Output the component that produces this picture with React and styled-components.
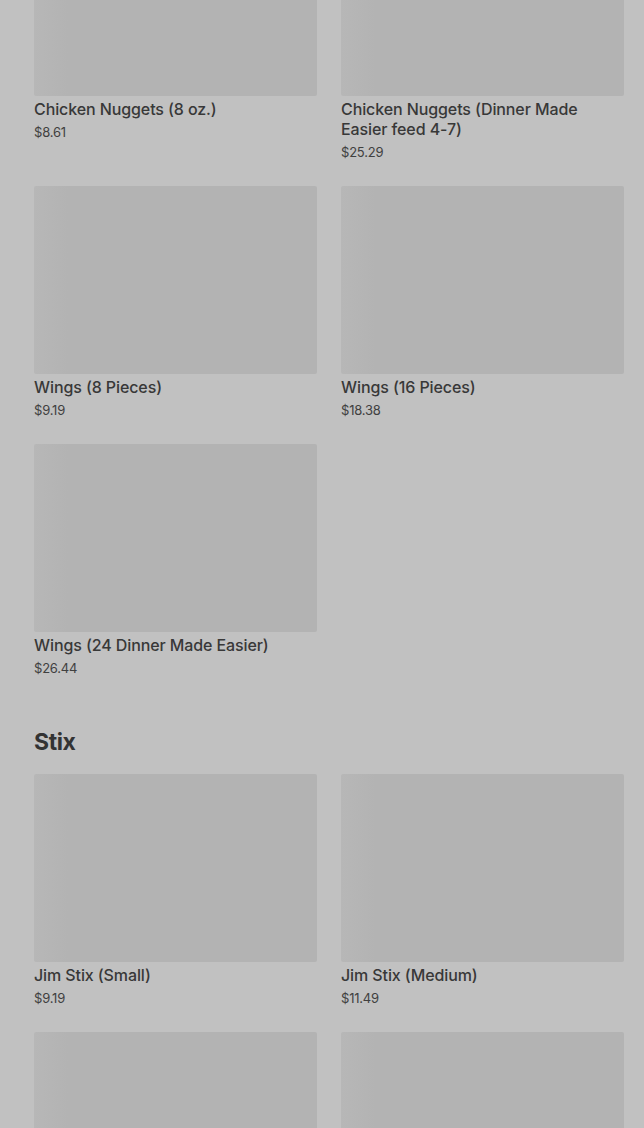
import React from 'react';
import styled, { createGlobalStyle } from 'styled-components';

const GlobalStyle = createGlobalStyle`
  html, body {
    margin: 0;
    padding: 0;
    background: #c1c1c1;
  }
  body {
    font-family: Inter, "Open Sans", sans-serif;
    color: #363636;
  }
  #root {
    height: 1128px;
    overflow: hidden;
  }
`;

const chicken = [
  { title: 'Chicken Nuggets (8 oz.)', price: '$8.61' },
  { title: 'Chicken Nuggets (Dinner Made Easier feed 4-7)', price: '$25.29' },
  { title: 'Wings (8 Pieces)', price: '$9.19' },
  { title: 'Wings (16 Pieces)', price: '$18.38' },
  { title: 'Wings (24 Dinner Made Easier)', price: '$26.44' },
];

// the last row only shows its photos in the visible frame
const stix = [
  { title: 'Jim Stix (Small)', price: '$9.19' },
  { title: 'Jim Stix (Medium)', price: '$11.49' },
  { title: null, price: null },
  { title: null, price: null },
];

const Menu = ({ sections }) => (
  <Page>
    {sections.map((section, i) => (
      <Section key={i}>
        {section.name && <Heading>{section.name}</Heading>}
        <Grid>
          {section.items.map((item, j) => (
            <Card key={j}>
              <Photo />
              {item.title && <Title>{item.title}</Title>}
              {item.price && <Price>{item.price}</Price>}
            </Card>
          ))}
        </Grid>
      </Section>
    ))}
  </Page>
);

export default function App() {
  return (
    <>
      <GlobalStyle />
      <Menu
        sections={[
          { name: null, items: chicken },
          { name: 'Stix', items: stix },
        ]}
      />
    </>
  );
}

const Page = styled.main`
  margin-top: -92px;
  padding: 0 20px 0 34px;
  display: flex;
  flex-direction: column;
  gap: 49px;
`;

const Section = styled.section`
  display: flex;
  flex-direction: column;
`;

const Heading = styled.h2`
  margin: 0 0 16px;
  font-size: 23px;
  line-height: 32px;
  font-weight: 700;
  letter-spacing: -0.4px;
  color: #333;
`;

const Grid = styled.div`
  display: grid;
  grid-template-columns: repeat(2, 1fr);
  column-gap: 24px;
  row-gap: 25px;
`;

const Card = styled.div`
  display: flex;
  flex-direction: column;
`;

const Photo = styled.div`
  height: 188px;
  background: linear-gradient(90deg, #b7b7b7 0%, #b3b3b3 12%, #b3b3b3 100%);
  border-radius: 2px;
`;

const Title = styled.div`
  margin-top: 3px;
  font-size: 16px;
  line-height: 20px;
  font-weight: 500;
  letter-spacing: -0.1px;
  color: #383838;
`;

const Price = styled.div`
  margin-top: 5px;
  font-size: 13px;
  line-height: 17px;
  color: #404040;
  letter-spacing: -0.2px;
`;
